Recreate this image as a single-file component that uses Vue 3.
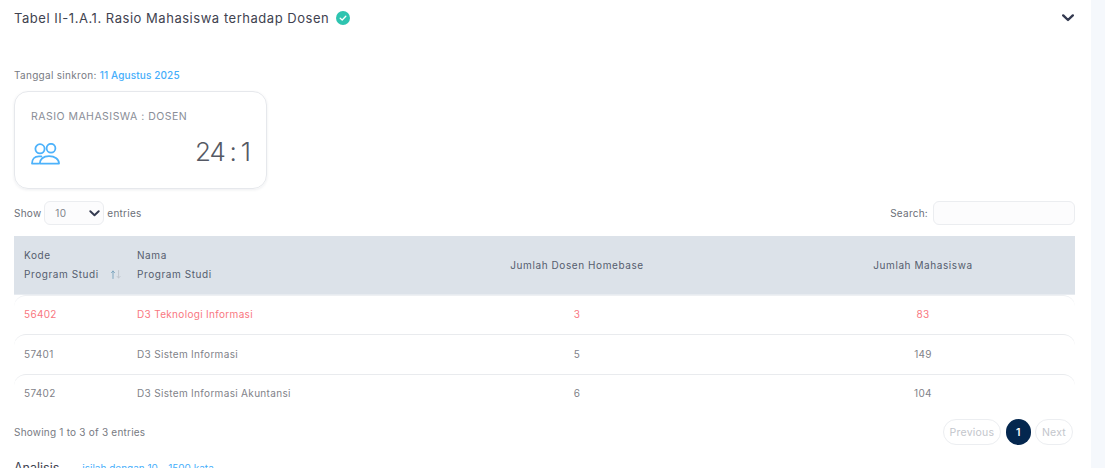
<script setup>
const rows = [
  { kode: '56402', nama: 'D3 Teknologi Informasi', dosen: 3, mhs: 83, warn: true },
  { kode: '57401', nama: 'D3 Sistem Informasi', dosen: 5, mhs: 149, warn: false },
  { kode: '57402', nama: 'D3 Sistem Informasi Akuntansi', dosen: 6, mhs: 104, warn: false },
]
</script>

<template>
  <div class="page">
    <main class="content">
      <header class="head">
        <div class="title">
          <span>Tabel II-1.A.1. Rasio Mahasiswa terhadap Dosen</span>
          <svg class="check" viewBox="0 0 14 14" width="14" height="14">
            <circle cx="7" cy="7" r="7" fill="#2ec4b0" />
            <path d="M4.2 7.2 6.2 9 9.8 5.2" fill="none" stroke="#fff" stroke-width="1.3" stroke-linecap="round" stroke-linejoin="round" />
          </svg>
        </div>
        <svg class="chev" viewBox="0 0 12 8" width="12" height="8">
          <path d="M1.2 1.4 6 6 10.8 1.4" fill="none" stroke="#343a50" stroke-width="2.4" stroke-linecap="round" stroke-linejoin="round" />
        </svg>
      </header>

      <p class="sync">Tanggal sinkron: <span class="date">11 Agustus 2025</span></p>

      <section class="card">
        <div class="card-label">RASIO MAHASISWA : DOSEN</div>
        <div class="card-body">
          <svg class="people" viewBox="0 0 29 22" width="29" height="22" fill="none" stroke="#4db2fb" stroke-width="1.8" stroke-linejoin="round">
            <circle cx="9" cy="5.8" r="4.6" />
            <circle cx="20" cy="5.2" r="4.4" />
            <path d="M1 20.6C1 16.4 3.6 13.4 7.8 13.4H10.4M1 20.6H7.6" stroke-linecap="round" />
            <path d="M8.8 20.6C8.8 16.2 12.2 13.2 18 13.2 24 13.2 28 16.2 28 20.6Z" />
          </svg>
          <div class="ratio">24 : 1</div>
        </div>
      </section>

      <div class="toolbar">
        <label class="show">
          Show
          <span class="select">10
            <svg viewBox="0 0 12 8" width="11" height="7">
              <path d="M1.2 1.4 6 6 10.8 1.4" fill="none" stroke="#343a50" stroke-width="2.2" stroke-linecap="round" stroke-linejoin="round" />
            </svg>
          </span>
          entries
        </label>
        <label class="search">Search: <span class="input"></span></label>
      </div>

      <table class="table">
        <colgroup>
          <col class="c1" /><col class="c2" /><col class="c3" /><col />
        </colgroup>
        <thead>
          <tr>
            <th class="sort">
              Kode<br />Program Studi
              <svg class="arrows" viewBox="0 0 10 9" width="10" height="9" fill="none" stroke-width="1" stroke-linecap="round" stroke-linejoin="round">
                <path d="M2 8.5V1M.5 2.6 2 1 3.5 2.6" stroke="#7fa6bf" />
                <path d="M7.6 .5V8M6.1 6.4 7.6 8 9.1 6.4" stroke="#c0c6ce" />
              </svg>
            </th>
            <th>Nama<br />Program Studi</th>
            <th class="mid">Jumlah Dosen Homebase</th>
            <th class="mid">Jumlah Mahasiswa</th>
          </tr>
        </thead>
        <tbody>
          <tr v-for="r in rows" :key="r.kode" :class="{ warn: r.warn }">
            <td>{{ r.kode }}</td>
            <td>{{ r.nama }}</td>
            <td class="mid">{{ r.dosen }}</td>
            <td class="mid">{{ r.mhs }}</td>
          </tr>
        </tbody>
      </table>

      <div class="foot">
        <span>Showing 1 to 3 of 3 entries</span>
        <nav class="pager">
          <span class="pg">Previous</span>
          <span class="pg current">1</span>
          <span class="pg">Next</span>
        </nav>
      </div>

      <div class="analisis">
        <span class="an-title">Analisis</span>
        <span class="an-hint">isilah dengan 10 - 1500 kata</span>
      </div>
    </main>
  </div>
</template>

<style>
html, body { margin: 0; background: #f5f8fc; }
</style>

<style scoped>
.page {
  height: 468px;
  overflow: hidden;
  font-family: "Inter", "Lato", "Liberation Sans", sans-serif;
  color: #6c6f78;
}
.content {
  width: 1091px;
  height: 468px;
  box-sizing: border-box;
  padding: 0 16px 0 14px;
  background: #fff;
  overflow: hidden;
}
.head {
  height: 35px;
  display: flex;
  align-items: center;
  justify-content: space-between;
  padding-right: 1px;
}
.title {
  display: flex;
  align-items: center;
  gap: 7px;
  font-size: 13px;
  letter-spacing: 0.53px;
  color: #3f4350;
}
.sync {
  margin: 33px 0 0;
  height: 15px;
  line-height: 15px;
  font-size: 10px;
  letter-spacing: 0.3px;
  color: #777a82;
}
.date { color: #45aefb; font-weight: 500; letter-spacing: 0.13px; }
.card {
  width: 253px;
  height: 98px;
  margin-top: 8px;
  box-sizing: border-box;
  padding: 18px 15px 0 16px;
  border: 1px solid #e6e8ec;
  border-radius: 14px;
  box-shadow: 0 1px 3px rgba(30, 40, 60, 0.08);
}
.card-label {
  font-size: 10.5px;
  line-height: 14px;
  letter-spacing: 0.48px;
  color: #8a8e97;
}
.card-body {
  margin-top: 13px;
  display: flex;
  align-items: center;
  justify-content: space-between;
}
.people { margin-top: 4px; }
.ratio {
  margin-right: 1px;
  font-size: 26px;
  font-weight: 300;
  line-height: 30px;
  letter-spacing: -1px;
  word-spacing: -1.5px;
  color: #555964;
}
.toolbar {
  margin-top: 12px;
  height: 24px;
  display: flex;
  align-items: center;
  justify-content: space-between;
  font-size: 10px;
  letter-spacing: 0.25px;
  color: #6c6f78;
}
.show, .search {
  display: flex;
  align-items: center;
  gap: 3px;
}
.search { gap: 5px; }
.select {
  width: 57px;
  height: 22px;
  display: flex;
  align-items: center;
  justify-content: space-between;
  padding: 0 1px 0 0;
  border: 1px solid #ebedf0;
  border-radius: 6px;
  background: #fcfcfd;
  text-indent: 10px;
  color: #80838b;
}
.select svg { margin-right: 2px; }
.input {
  width: 140px;
  height: 22px;
  border: 1px solid #ebedf0;
  border-radius: 6px;
  background: #fcfcfd;
}
.table {
  width: 1061px;
  margin-top: 11px;
  border-collapse: separate;
  border-spacing: 0;
  table-layout: fixed;
  font-size: 10px;
}
.c1 { width: 113px; }
.c2 { width: 256px; }
.c3 { width: 388px; }
th {
  height: 59px;
  padding: 0 0 0 10px;
  box-sizing: border-box;
  background: #dce2e9;
  border-bottom: 1px solid #e7ebf0;
  text-align: left;
  font-weight: 400;
  line-height: 19px;
  letter-spacing: 0.58px;
  color: #555d6e;
}
th.sort { position: relative; }
.arrows {
  position: absolute;
  right: 6px;
  bottom: 15px;
}
td {
  height: 40px;
  padding: 0 0 2px 10px;
  box-sizing: border-box;
  border-top: 1px solid #e9ebee;
  color: #7f8289;
  letter-spacing: 0.32px;
}
tbody tr:first-child td { height: 39px; border-top-color: #eef0f3; }
tbody tr:last-child td { height: 39px; }
td:first-child { border-top-left-radius: 12px; }
td:last-child { border-top-right-radius: 12px; }
tr.warn td { color: #f9777f; }
th.mid, td.mid { text-align: center; padding-left: 0; }
.foot {
  margin-top: 6px;
  display: flex;
  align-items: center;
  justify-content: space-between;
  font-size: 10px;
  color: #777a82;
  letter-spacing: 0.22px;
}
.pager {
  display: flex;
  gap: 4px;
  margin-right: 2px;
}
.pg {
  height: 24px;
  min-width: 25px;
  padding: 0 6px;
  display: flex;
  align-items: center;
  justify-content: center;
  border: 1px solid #eceef1;
  border-radius: 13px;
  color: #c3c6cc;
  font-size: 10.5px;
}
.pg:first-child { width: 44px; }
.pg:last-child { min-width: 24px; }
.pg.current {
  width: 25px;
  min-width: 25px;
  margin-left: 1px;
  box-sizing: border-box;
  height: 26px;
  padding: 0;
  border: 0;
  background: #04274f;
  color: #fff;
  font-weight: 600;
}
.analisis {
  margin-top: 15px;
  display: flex;
  align-items: baseline;
  gap: 23px;
}
.an-title { font-size: 12.5px; color: #3f4350; }
.an-hint { font-size: 10px; color: #45aefb; }
</style>
